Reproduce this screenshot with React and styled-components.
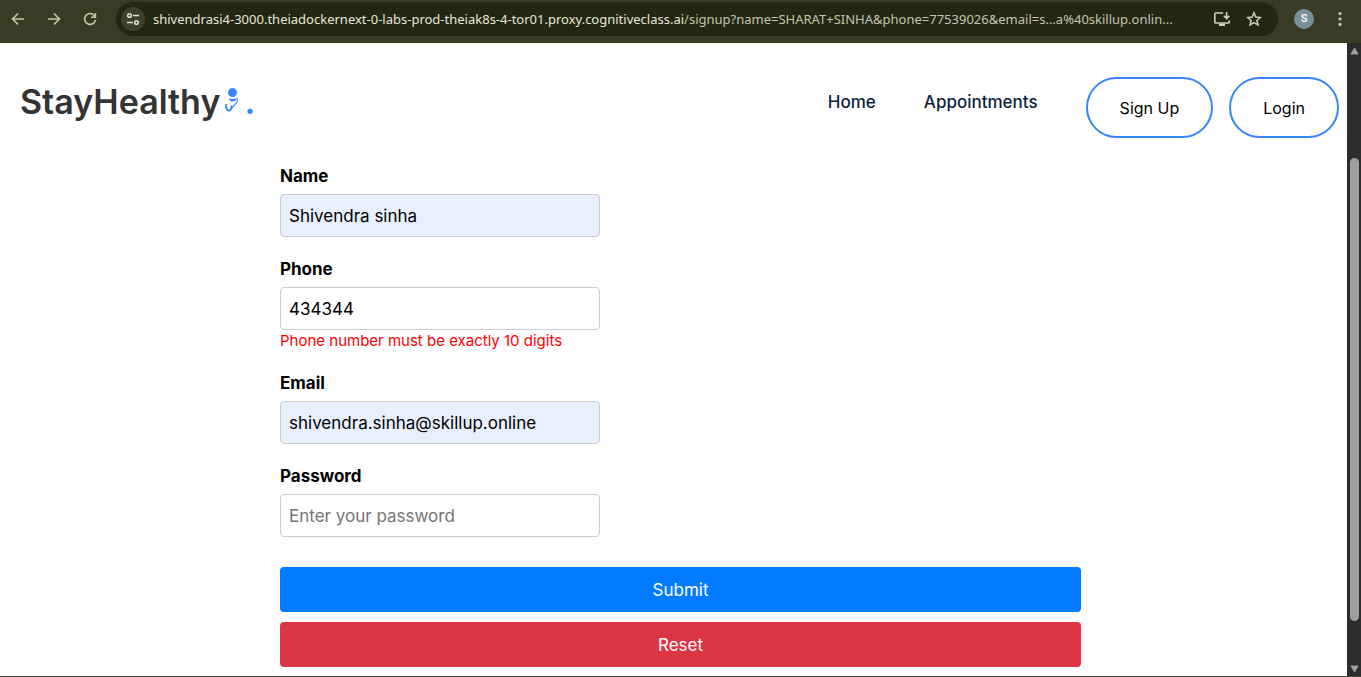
import React from "react";
import styled, { createGlobalStyle } from "styled-components";

const GlobalStyle = createGlobalStyle`
  * { box-sizing: border-box; }
  body { margin: 0; background: #fff; font-family: Inter, "Liberation Sans", sans-serif; font-size: 16px; }
`;

const Window = styled.div`
  display: flex;
  flex-direction: column;
  min-height: 100vh;
  border-bottom: 1px solid #45463a;
`;

const Toolbar = styled.header`
  display: flex;
  align-items: center;
  padding: 2px 9px 7px 6px;
  background: #3a3b24;
`;

const ToolButton = styled.button`
  display: grid;
  place-items: center;
  width: 24px;
  height: 24px;
  flex: none;
  padding: 0;
  border: 0;
  border-radius: 50%;
  background: ${(p) => p.$fill || "transparent"};
  color: ${(p) => p.$color || "#c5c9a4"};
`;

const History = styled.div`
  display: flex;
  gap: 12px;
`;

const AddressBar = styled.div`
  display: flex;
  align-items: center;
  gap: 8px;
  flex: 1;
  min-width: 0;
  height: 34px;
  margin: 0 14px;
  padding: 0 12px 0 5px;
  border-radius: 17px;
  background: #232611;
`;

const Url = styled.div`
  flex: 1;
  min-width: 0;
  overflow: hidden;
  white-space: nowrap;
  font: 13px/20px "Noto Sans", "Open Sans", sans-serif;
  color: #c3c5b3;
`;

const Host = styled.span`
  color: #e6e7d9;
`;

const Avatar = styled.button`
  width: 20px;
  height: 20px;
  padding: 0;
  border: 0;
  border-radius: 50%;
  background: #78909c;
  color: #fff;
  font: 500 11px/20px Roboto, sans-serif;
  margin: 0 14px 0 2px;
`;

const Viewport = styled.div`
  display: flex;
  flex: 1;
`;

const Page = styled.div`
  flex: 1;
  min-width: 0;
`;

const SiteHeader = styled.div`
  display: flex;
  align-items: flex-start;
  justify-content: space-between;
  padding: 34px 8px 26px 20px;
`;

const Brand = styled.a`
  display: flex;
  align-items: center;
  color: #333;
  text-decoration: none;
  font-size: 34px;
  font-weight: 600;
  line-height: 50px;
`;

const Dot = styled.span`
  color: #3685fb;
`;

const Nav = styled.nav`
  display: flex;
  align-items: flex-start;
  gap: 48px;
`;

const NavLink = styled.a`
  color: #0c1f3d;
  font-weight: 500;
  font-size: 17px;
  line-height: 50px;
  text-decoration: none;
`;

const Actions = styled.div`
  display: flex;
  gap: 16px;
`;

const PillButton = styled.button`
  height: 61px;
  padding: 0 32px;
  border: 2px solid #3685fb;
  border-radius: 31px;
  background: #fff;
  color: #000;
  font: 16px/24px Inter, sans-serif;
`;

const Main = styled.main`
  padding-left: 14px;
`;

const Form = styled.form`
  max-width: 801px;
  margin: 0 auto;
  padding-bottom: 9px;
`;

const Field = styled.div`
  margin-bottom: 20px;
`;

const Label = styled.label`
  display: block;
  margin-bottom: 6px;
  font-weight: 700;
  font-size: 17px;
  line-height: 24px;
`;

const Input = styled.input`
  display: block;
  width: 100%;
  max-width: 320px;
  height: 43px;
  padding: 8px;
  border: 1px solid #ccc;
  border-radius: 4px;
  background: ${(p) => (p.$filled ? "#e8f0fe" : "#fff")};
  color: #000;
  font: 17px/24px Inter, sans-serif;
  &::placeholder { color: #757575; }
`;

const ErrorText = styled.div`
  color: #f00;
  font-size: 15px;
  line-height: 21px;
`;

const Buttons = styled.div`
  display: grid;
  gap: 10px;
  padding-top: 10px;
`;

const ActionButton = styled.button`
  height: 45px;
  border: 0;
  border-radius: 4px;
  background: ${(p) => p.$tone};
  color: #fff;
  font: 17px/24px Inter, sans-serif;
`;

const Scrollbar = styled.div`
  display: flex;
  flex-direction: column;
  align-items: center;
  width: 14px;
  padding: 4px 0 3px;
  background: #2c2c2c;
`;

const Thumb = styled.div`
  width: 9px;
  flex: 463;
  border-radius: 5px;
  background: #9f9f9f;
`;

const Space = styled.div`
  flex: ${(p) => p.$size};
`;

const Icon = ({ size = 16, children }) => (
  <svg width={size} height={size} viewBox={`0 0 ${size} ${size}`} fill="none" stroke="currentColor" strokeWidth="1.6" aria-hidden="true">
    {children}
  </svg>
);

const Arrow = ({ d }) => (
  <svg width="9" height="8" viewBox="0 0 9 8" fill="#9f9f9f" stroke="#9f9f9f" strokeLinejoin="round" aria-hidden="true">
    <path d={d} />
  </svg>
);

const DoctorMark = () => (
  <svg width="24" height="32" viewBox="0 0 24 32" fill="#3685fb" aria-hidden="true">
    <circle cx="12.5" cy="6.6" r="4.5" />
    <path d="M8.8 12.2Q12.5 13.6 16.5 12.2Q15.6 15.6 12.6 15.6Q9.8 15.6 8.8 12.2Z" />
    <path d="M17.2 12V15.2Q16.8 17 15 18.6L11.6 22.4" fill="none" stroke="#3685fb" strokeWidth="1.1" />
    <path d="M6.2 19.5V21.6Q6.8 24.6 9 24.6Q11.6 24.4 11.6 19.6" fill="none" stroke="#3685fb" strokeWidth="1.9" />
    <path d="M5 18.8H7.4" fill="none" stroke="#3685fb" strokeWidth="1.3" />
  </svg>
);

const fields = [
  { id: "name", label: "Name", type: "text", value: "Shivendra sinha", filled: true },
  { id: "phone", label: "Phone", type: "tel", value: "434344", error: "Phone number must be exactly 10 digits" },
  { id: "email", label: "Email", type: "email", value: "shivendra.sinha@skillup.online", filled: true },
  { id: "password", label: "Password", type: "password", placeholder: "Enter your password" },
];

export default function App() {
  return (
    <Window>
      <GlobalStyle />
      <Toolbar>
        <History>
          <ToolButton aria-label="Back">
            <Icon><path d="M14 8H3M8 2.5L2.5 8L8 13.5" /></Icon>
          </ToolButton>
          <ToolButton aria-label="Forward">
            <Icon><path d="M2 8H13M8 2.5L13.5 8L8 13.5" /></Icon>
          </ToolButton>
          <ToolButton aria-label="Reload">
            <Icon><path d="M13.4 8.8A5.4 5.4 0 1 1 12.2 4.5L13.4 6M13.4 2V6.3H9" /></Icon>
          </ToolButton>
        </History>
        <AddressBar>
          <ToolButton aria-label="Site information" $fill="#3e402b" $color="#dfe1cf">
            <Icon>
              <circle cx="4.5" cy="4.5" r="1.8" />
              <path d="M8 4.5H14M2 11.5H8" />
              <circle cx="11.5" cy="11.5" r="1.8" />
            </Icon>
          </ToolButton>
          <Url>
            <Host>shivendrasi4-3000.theiadockernext-0-labs-prod-theiak8s-4-tor01.proxy.cognitiveclass.ai</Host>
            /signup?name=SHARAT+SINHA&amp;phone=77539026&amp;email=s...a%40skillup.onlin...
          </Url>
          <ToolButton aria-label="Install app" $color="#cfd1bd">
            <Icon size={18}>
              <path d="M10 3H2.5Q1.8 3 1.8 3.7V12.3Q1.8 13 2.5 13H15.5Q16.2 13 16.2 12.3V10.5M13.6 2V8.3M10.8 5.7L13.6 8.5L16.4 5.7" />
              <path d="M6 14.8H12" strokeWidth="2.4" />
            </Icon>
          </ToolButton>
          <ToolButton aria-label="Bookmark" $color="#cfd1bd">
            <Icon>
              <path d="M8 1.8L9.8 6.1L14.4 6.5L10.9 9.5L12 14L8 11.6L4 14L5.1 9.5L1.6 6.5L6.2 6.1Z" strokeWidth="1.5" />
            </Icon>
          </ToolButton>
        </AddressBar>
        <Avatar aria-label="Profile">S</Avatar>
        <ToolButton aria-label="Menu">
          <Icon>
            <g fill="currentColor" stroke="none">
              <circle cx="8" cy="2.6" r="1.6" />
              <circle cx="8" cy="8" r="1.6" />
              <circle cx="8" cy="13.4" r="1.6" />
            </g>
          </Icon>
        </ToolButton>
      </Toolbar>
      <Viewport>
        <Page>
          <SiteHeader>
            <Brand href="#">
              StayHealthy<DoctorMark /><Dot>.</Dot>
            </Brand>
            <Nav>
              <NavLink href="#">Home</NavLink>
              <NavLink href="#">Appointments</NavLink>
              <Actions>
                <PillButton>Sign Up</PillButton>
                <PillButton>Login</PillButton>
              </Actions>
            </Nav>
          </SiteHeader>
          <Main>
            <Form onSubmit={(e) => e.preventDefault()}>
              {fields.map((f) => (
                <Field key={f.id}>
                  <Label htmlFor={f.id}>{f.label}</Label>
                  <Input id={f.id} type={f.type} defaultValue={f.value} placeholder={f.placeholder} $filled={f.filled} />
                  {f.error && <ErrorText>{f.error}</ErrorText>}
                </Field>
              ))}
              <Buttons>
                <ActionButton type="submit" $tone="#007bff">Submit</ActionButton>
                <ActionButton type="reset" $tone="#dc3545">Reset</ActionButton>
              </Buttons>
            </Form>
          </Main>
        </Page>
        <Scrollbar aria-hidden="true">
          <Arrow d="M4.5 1L8 7H1Z" />
          <Space $size={103} />
          <Thumb />
          <Space $size={44} />
          <Arrow d="M4.5 7L8 1H1Z" />
        </Scrollbar>
      </Viewport>
    </Window>
  );
}
